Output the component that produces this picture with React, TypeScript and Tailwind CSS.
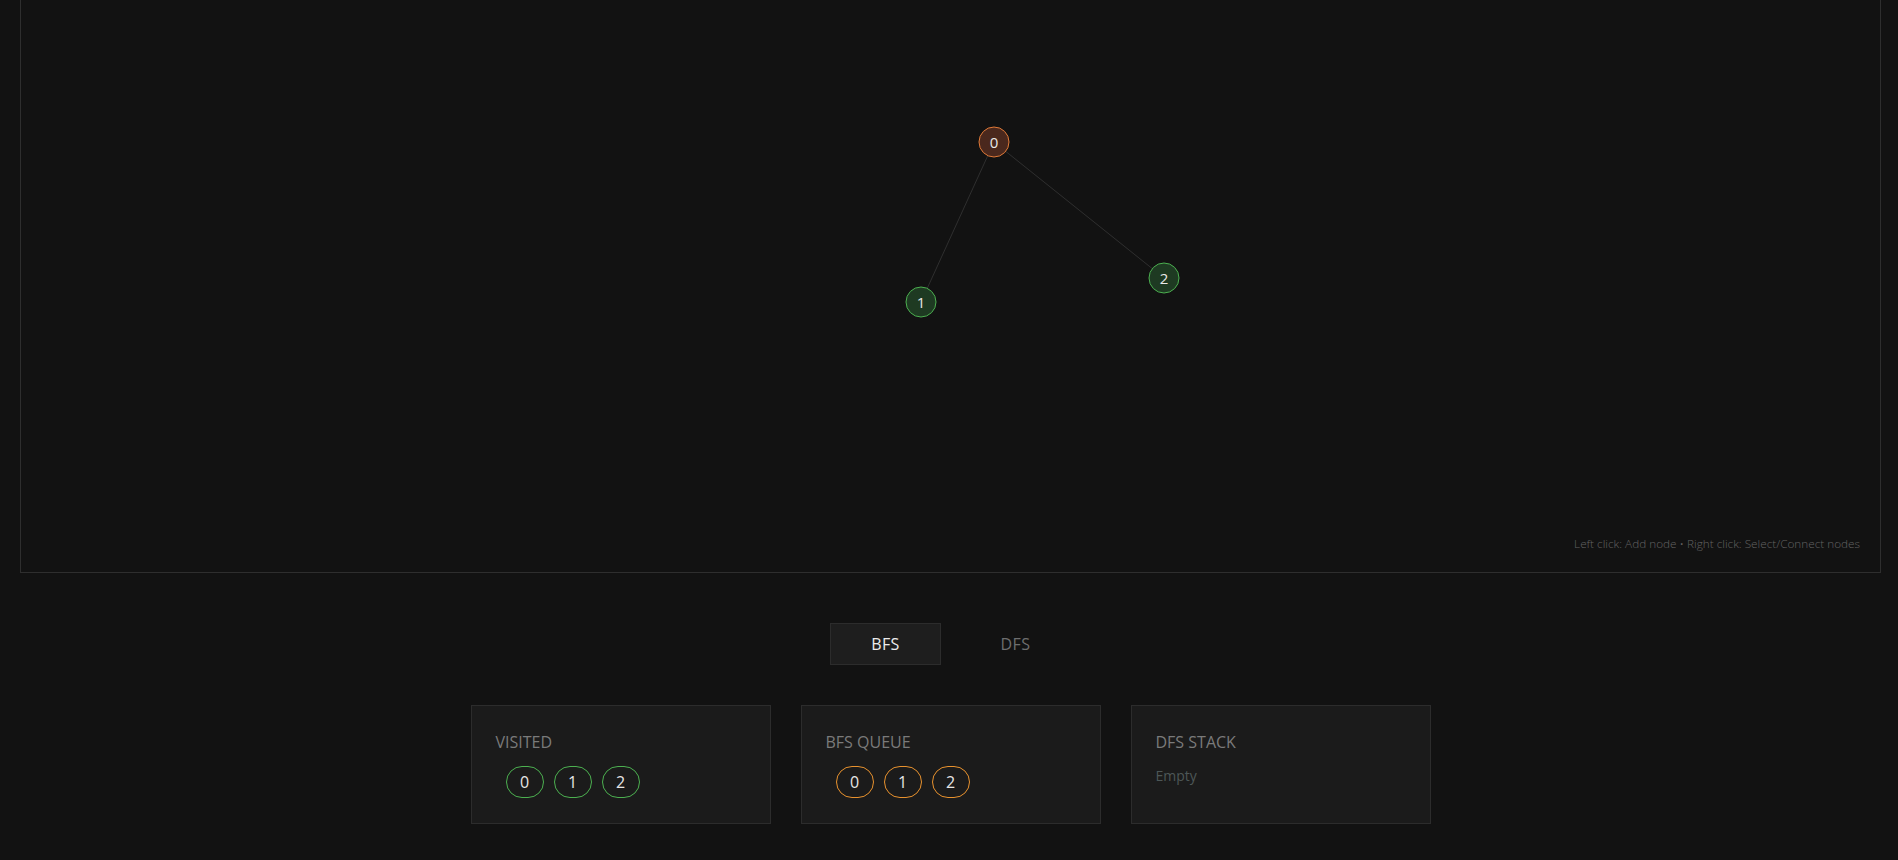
import React from "react";

const nodes = [
  { id: 0, x: 973, y: 142, fill: "#4a281d", stroke: "#e07a38" },
  { id: 1, x: 900, y: 302, fill: "#1e3a22", stroke: "#4cb050" },
  { id: 2, x: 1143, y: 278, fill: "#1e3a22", stroke: "#4cb050" },
];

const edges: [number, number][] = [
  [0, 1],
  [0, 2],
];

function Badge({ label, color }: { label: string; color: "green" | "orange" }) {
  return (
    <div
      className={
        color === "green"
          ? "flex h-8 w-[38px] items-center justify-center rounded-full border border-[#4cb050] text-[16px] text-[#e6e6e6]"
          : "flex h-8 w-[38px] items-center justify-center rounded-full border border-[#e8922e] text-[16px] text-[#e6e6e6]"
      }
    >
      {label}
    </div>
  );
}

export default function App() {
  return (
    <div className="min-h-screen bg-[#121212] pl-[20px] pr-[17px] font-['Open_Sans',_'Noto_Sans',_sans-serif]">
      <div className="relative h-[573px] w-full border-x border-b border-[#2e2e2e]">
        <svg className="absolute inset-0 h-full w-full" xmlns="http://www.w3.org/2000/svg">
          {edges.map(([a, b]) => (
            <line
              key={`${a}-${b}`}
              x1={nodes[a].x}
              y1={nodes[a].y}
              x2={nodes[b].x}
              y2={nodes[b].y}
              stroke="#2f2f2f"
              strokeWidth={1}
            />
          ))}
          {nodes.map((n) => (
            <g key={n.id}>
              <circle cx={n.x} cy={n.y} r={15} fill={n.fill} stroke={n.stroke} strokeWidth={1} />
              <text
                x={n.x}
                y={n.y + 5.5}
                textAnchor="middle"
                fontSize={15}
                fill="#e8e8e8"
                fontFamily="'Open Sans', sans-serif"
              >
                {n.id}
              </text>
            </g>
          ))}
        </svg>
        <div className="absolute bottom-5 right-5 text-[11.75px] font-light leading-[18px] text-[#626262]">
          Left click: Add node • Right click: Select/Connect nodes
        </div>
      </div>

      <div className="mt-[50px] flex justify-center gap-[19px]">
        <button className="flex h-[42px] w-[111px] items-center justify-center border border-[#2c2c2c] bg-[#1e1e1e] text-[16px] tracking-wide text-[#ececec]">
          BFS
        </button>
        <button className="flex h-[42px] w-[111px] items-center justify-center text-[16px] tracking-wide text-[#6e6e6e]">
          DFS
        </button>
      </div>

      <div className="mx-auto mt-10 grid w-[960px] grid-cols-3 gap-[30px]">
        <div className="min-h-[119px] border border-[#2c2c2c] bg-[#1b1b1b] p-6">
          <div className="text-[16px] leading-6 text-[#7a7a7a]">VISITED</div>
          <div className="mt-3 flex gap-[10px] pl-[10px]">
            <Badge label="0" color="green" />
            <Badge label="1" color="green" />
            <Badge label="2" color="green" />
          </div>
        </div>
        <div className="min-h-[119px] border border-[#2c2c2c] bg-[#1b1b1b] p-6">
          <div className="text-[16px] leading-6 text-[#7a7a7a]">BFS QUEUE</div>
          <div className="mt-3 flex gap-[10px] pl-[10px]">
            <Badge label="0" color="orange" />
            <Badge label="1" color="orange" />
            <Badge label="2" color="orange" />
          </div>
        </div>
        <div className="min-h-[119px] border border-[#2c2c2c] bg-[#1b1b1b] p-6">
          <div className="text-[16px] leading-6 text-[#7a7a7a]">DFS STACK</div>
          <div className="mt-3 text-[14px] leading-5 text-[#4d5757]">Empty</div>
        </div>
      </div>
    </div>
  );
}
